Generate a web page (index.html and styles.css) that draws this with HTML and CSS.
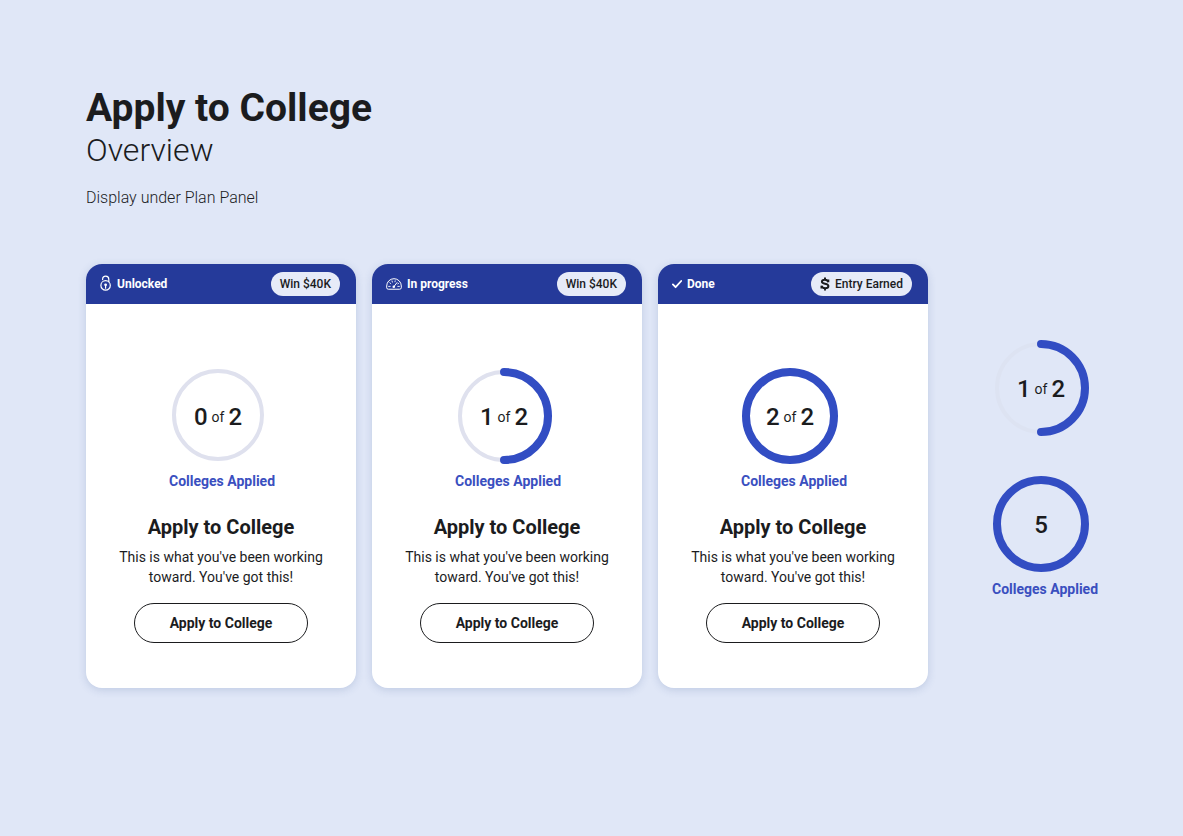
FILE: index.html
```html
<!DOCTYPE html>
<html lang="en">
<head>
<meta charset="utf-8">
<title>Apply to College – Overview</title>
<meta name="viewport" content="width=device-width, initial-scale=1">
<link rel="stylesheet" href="styles.css">
</head>
<body>
<main class="page">
  <header class="intro">
    <h1 class="intro-title">Apply to College</h1>
    <p class="intro-subtitle">Overview</p>
    <p class="intro-note">Display under Plan Panel</p>
  </header>

  <div class="board">
    <article class="card">
      <div class="card-bar">
        <span class="status">
          <svg class="icon icon-lock" viewBox="0 0 12 16" aria-hidden="true">
            <circle cx="5.6" cy="9.4" r="4.7"/>
            <path d="M2.6 3.6V3.2a3.1 3.1 0 0 1 6.2 0v2.6M5.6 9.4v2.8"/>
            <circle class="solid" cx="5.6" cy="8.8" r="1.4"/>
          </svg>
          Unlocked
        </span>
        <span class="pill">Win $40K</span>
      </div>
      <div class="card-body">
        <div class="progress">
          <div class="ring">
            <svg class="ring-art" viewBox="0 0 98 96" aria-hidden="true"><circle class="track" cx="49" cy="47" r="44"/></svg>
            <p class="count"><strong>0</strong> of <strong>2</strong></p>
          </div>
          <p class="progress-label">Colleges Applied</p>
        </div>
        <h2 class="card-title">Apply to College</h2>
        <p class="card-text">This is what you've been working toward. You've got this!</p>
        <button class="action" type="button">Apply to College</button>
      </div>
    </article>

    <article class="card">
      <div class="card-bar">
        <span class="status">
          <svg class="icon icon-gauge" viewBox="0 0 16 12" aria-hidden="true">
            <path d="M2 11.2a1.4 1.4 0 0 1-1.3-1.4V8a7.3 7.3 0 0 1 14.6 0v1.8a1.4 1.4 0 0 1-1.3 1.4z"/>
            <path d="M7.8 8.8 11 4.6"/>
            <path class="ticks" d="M2.6 8.4h1.6M3.8 4.8l1 .8M6 2.9l.4 1.2M9.2 2.8 9 3.8M11.8 8.4h1.6M12.6 5.4l-.8.5"/>
            <circle class="solid" cx="7.8" cy="8.8" r="1.3"/>
          </svg>
          In progress
        </span>
        <span class="pill">Win $40K</span>
      </div>
      <div class="card-body">
        <div class="progress">
          <div class="ring">
            <svg class="ring-art" viewBox="0 0 98 96" aria-hidden="true"><circle class="track" cx="49" cy="48" r="44"/><path class="value" d="M49 4a44 44 0 0 1 0 88"/></svg>
            <p class="count"><strong>1</strong> of <strong>2</strong></p>
          </div>
          <p class="progress-label">Colleges Applied</p>
        </div>
        <h2 class="card-title">Apply to College</h2>
        <p class="card-text">This is what you've been working toward. You've got this!</p>
        <button class="action" type="button">Apply to College</button>
      </div>
    </article>

    <article class="card">
      <div class="card-bar">
        <span class="status">
          <svg class="icon icon-check" viewBox="0 0 10 10" aria-hidden="true"><path d="M.9 5.4 3.6 8.2 9.2 2"/></svg>
          Done
        </span>
        <span class="pill">
          <svg class="icon icon-dollar" viewBox="0 0 10 14" aria-hidden="true">
            <path d="M8.3 5.2C8 3.6 6.7 2.7 4.9 2.7 3.1 2.7 1.9 3.5 1.9 4.8 1.9 7.6 8.4 6 8.4 9.1c0 1.4-1.3 2.2-3.3 2.2-2 0-3.3-.9-3.6-2.6M5 .4v2.3M5 11.3v2.3M8.3 2.4v2.8M1.5 8.7v2.8"/>
          </svg>
          Entry Earned
        </span>
      </div>
      <div class="card-body">
        <div class="progress">
          <div class="ring">
            <svg class="ring-art" viewBox="0 0 98 96" aria-hidden="true"><circle class="value" cx="49" cy="48" r="44"/></svg>
            <p class="count"><strong>2</strong> of <strong>2</strong></p>
          </div>
          <p class="progress-label">Colleges Applied</p>
        </div>
        <h2 class="card-title">Apply to College</h2>
        <p class="card-text">This is what you've been working toward. You've got this!</p>
        <button class="action" type="button">Apply to College</button>
      </div>
    </article>

    <aside class="samples">
      <div class="ring">
        <svg class="ring-art" viewBox="0 0 98 96" aria-hidden="true"><circle class="track faint" cx="49" cy="48" r="44"/><path class="value" d="M49 4a44 44 0 0 1 0 88"/></svg>
        <p class="count"><strong>1</strong> of <strong>2</strong></p>
      </div>
      <div class="progress">
        <div class="ring">
          <svg class="ring-art" viewBox="0 0 98 96" aria-hidden="true"><circle class="value" cx="49" cy="48" r="44"/></svg>
          <p class="count"><strong>5</strong></p>
        </div>
        <p class="progress-label">Colleges Applied</p>
      </div>
    </aside>
  </div>
</main>
</body>
</html>
```
FILE: styles.css
```css
* {
  box-sizing: border-box;
}

body {
  margin: 0;
  background: #e0e7f7;
  color: #1b1c1e;
  font-family: Roboto, "Liberation Sans", sans-serif;
}

h1, h2, p {
  margin: 0;
}

.page {
  padding: 86px 86px 40px;
}

.intro-title {
  font-size: 39px;
  line-height: 44px;
  font-weight: 700;
}

.intro-subtitle {
  font-size: 32px;
  line-height: 40px;
  font-weight: 300;
}

.intro-note {
  margin-top: 16px;
  font-size: 16px;
  line-height: 24px;
  font-weight: 300;
}

.board {
  display: flex;
  flex-wrap: wrap;
  align-items: flex-start;
  gap: 16px;
  margin-top: 54px;
}

.card {
  flex: 0 1 270px;
  border-radius: 16px;
  overflow: hidden;
  background: #fff;
  box-shadow: 0 2px 8px rgba(60, 90, 150, 0.2);
}

.card-bar {
  display: flex;
  align-items: center;
  justify-content: space-between;
  height: 40px;
  padding: 0 16px 0 14px;
  background: #253a9a;
}

.status {
  display: flex;
  align-items: center;
  gap: 5px;
  color: #fff;
  font-size: 12px;
  font-weight: 700;
}

.icon {
  fill: none;
  stroke: currentColor;
  stroke-linecap: round;
  stroke-linejoin: round;
}

.icon .solid {
  fill: currentColor;
  stroke: none;
}

.icon .ticks {
  stroke-width: 0.9;
}

.icon-lock {
  width: 12px;
  height: 16px;
  overflow: visible;
  stroke-width: 1.2;
}

.icon-gauge {
  width: 16px;
  height: 12px;
}

.icon-check {
  width: 10px;
  height: 10px;
  stroke-width: 1.8;
}

.icon-dollar {
  width: 10px;
  height: 14px;
  stroke-width: 2;
  stroke-linecap: butt;
}

.pill {
  display: flex;
  align-items: center;
  gap: 5px;
  height: 24px;
  padding: 0 9px;
  border-radius: 12px;
  background: #e6ebf8;
  font-size: 12px;
  font-weight: 500;
}

.card-body {
  display: flex;
  flex-direction: column;
  align-items: center;
  padding: 64px 32px 45px;
}

.progress {
  width: 104px;
}

.ring {
  display: grid;
  width: 98px;
  place-items: center;
}

.ring > * {
  grid-area: 1 / 1;
}

.ring-art {
  display: block;
  width: 98px;
  height: 96px;
  fill: none;
}

.track {
  stroke: #dfe1ee;
  stroke-width: 4;
}

.track.faint {
  stroke: #dde3f2;
}

.value {
  stroke: #324dc3;
  stroke-width: 8;
  stroke-linecap: round;
}

.count {
  display: flex;
  align-items: center;
  gap: 4px;
  padding-top: 2px;
  font-size: 14px;
  line-height: 28px;
}

.count strong {
  font-size: 24px;
  font-weight: 500;
}

.progress-label {
  margin-top: 7px;
  color: #3a4fbf;
  font-size: 14px;
  line-height: 20px;
  font-weight: 700;
  white-space: nowrap;
}

.card-title {
  margin-top: 24px;
  font-size: 20px;
  line-height: 24px;
  font-weight: 700;
}

.card-text {
  margin-top: 8px;
  font-size: 14px;
  line-height: 20px;
  text-align: center;
}

.action {
  width: 174px;
  height: 40px;
  margin-top: 16px;
  border: 1px solid #1b1c1e;
  border-radius: 20px;
  background: #fff;
  color: inherit;
  font: 700 14px/20px Roboto, "Liberation Sans", sans-serif;
}

.samples {
  display: flex;
  flex-direction: column;
  gap: 40px;
  margin: 76px 0 0 48px;
}
```
